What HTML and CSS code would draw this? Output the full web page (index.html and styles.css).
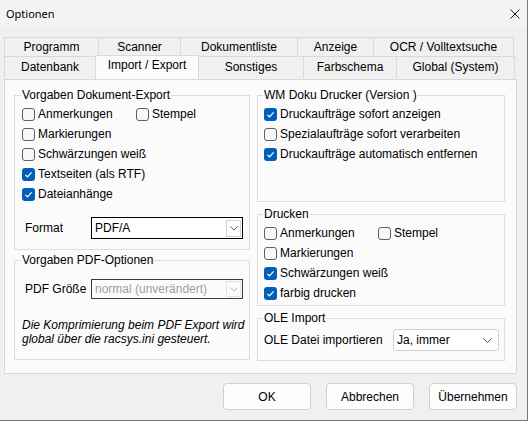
FILE: index.html
```html
<!DOCTYPE html>
<html lang="de">
<head>
<meta charset="utf-8">
<title>Optionen</title>
<link rel="stylesheet" href="styles.css">
</head>
<body>
<div class="window">
  <div class="titlebar">
    <span class="title">Optionen</span>
    <span class="close"><svg width="10" height="10" viewBox="0 0 10 10"><path d="M0.5 0.5 L9.5 9.5 M9.5 0.5 L0.5 9.5" stroke="#1a1a1a" stroke-width="1" fill="none"/></svg></span>
  </div>
  <div class="tabs">
    <div class="tabrow back">
      <div class="tab t-programm">Programm</div>
      <div class="tab t-scanner">Scanner</div>
      <div class="tab t-dokliste">Dokumentliste</div>
      <div class="tab t-anzeige">Anzeige</div>
      <div class="tab t-ocr last">OCR / Volltextsuche</div>
    </div>
    <div class="tabrow front">
      <div class="tab t-datenbank">Datenbank</div>
      <div class="tab t-import selected">Import / Export</div>
      <div class="tab t-sonstiges after-selected">Sonstiges</div>
      <div class="tab t-farbschema">Farbschema</div>
      <div class="tab t-global last">Global (System)</div>
    </div>
    <div class="panel">
      <div class="col col-left">
        <fieldset class="group g-export">
          <legend>Vorgaben Dokument-Export</legend>
          <div class="row">
            <label class="cb fixed"><span class="box"></span>Anmerkungen</label>
            <label class="cb"><span class="box"></span>Stempel</label>
          </div>
          <div class="row"><label class="cb"><span class="box"></span>Markierungen</label></div>
          <div class="row"><label class="cb"><span class="box"></span>Schwärzungen weiß</label></div>
          <div class="row"><label class="cb"><span class="box checked"><svg width="13" height="13" viewBox="0 0 13 13"><path d="M3.4 6.9 L5.5 8.8 L9.6 4.4" stroke="#fff" stroke-width="1.2" fill="none"/></svg></span>Textseiten (als RTF)</label></div>
          <div class="row"><label class="cb"><span class="box checked"><svg width="13" height="13" viewBox="0 0 13 13"><path d="M3.4 6.9 L5.5 8.8 L9.6 4.4" stroke="#fff" stroke-width="1.2" fill="none"/></svg></span>Dateianhänge</label></div>
          <div class="field-row format-row">
            <span class="field-label">Format</span>
            <div class="select select-format">
              <span class="value">PDF/A</span>
              <span class="arrowbox"><svg width="8" height="5" viewBox="0 0 8 5"><path d="M0.5 0.5 L4 4 L7.5 0.5" stroke="#606060" stroke-width="1" fill="none"/></svg></span>
            </div>
          </div>
        </fieldset>
        <fieldset class="group g-pdf">
          <legend>Vorgaben PDF-Optionen</legend>
          <div class="field-row pdf-row">
            <span class="field-label">PDF Größe</span>
            <div class="select select-pdf">
              <span class="value">normal (unverändert)</span>
              <span class="arrowbox disabled"><svg width="8" height="5" viewBox="0 0 8 5"><path d="M0.5 0.5 L4 4 L7.5 0.5" stroke="#b5b5b5" stroke-width="1" fill="none"/></svg></span>
            </div>
          </div>
          <p class="note">Die Komprimierung beim PDF Export wird<br>global über die racsys.ini gesteuert.</p>
        </fieldset>
      </div>
      <div class="col col-right">
        <fieldset class="group g-wm">
          <legend>WM Doku Drucker (Version )</legend>
          <div class="row"><label class="cb"><span class="box checked"><svg width="13" height="13" viewBox="0 0 13 13"><path d="M3.4 6.9 L5.5 8.8 L9.6 4.4" stroke="#fff" stroke-width="1.2" fill="none"/></svg></span>Druckaufträge sofort anzeigen</label></div>
          <div class="row"><label class="cb"><span class="box"></span>Spezialaufträge sofort verarbeiten</label></div>
          <div class="row"><label class="cb"><span class="box checked"><svg width="13" height="13" viewBox="0 0 13 13"><path d="M3.4 6.9 L5.5 8.8 L9.6 4.4" stroke="#fff" stroke-width="1.2" fill="none"/></svg></span>Druckaufträge automatisch entfernen</label></div>
        </fieldset>
        <fieldset class="group g-drucken">
          <legend>Drucken</legend>
          <div class="row">
            <label class="cb fixed"><span class="box"></span>Anmerkungen</label>
            <label class="cb"><span class="box"></span>Stempel</label>
          </div>
          <div class="row"><label class="cb"><span class="box"></span>Markierungen</label></div>
          <div class="row"><label class="cb"><span class="box checked"><svg width="13" height="13" viewBox="0 0 13 13"><path d="M3.4 6.9 L5.5 8.8 L9.6 4.4" stroke="#fff" stroke-width="1.2" fill="none"/></svg></span>Schwärzungen weiß</label></div>
          <div class="row"><label class="cb"><span class="box checked"><svg width="13" height="13" viewBox="0 0 13 13"><path d="M3.4 6.9 L5.5 8.8 L9.6 4.4" stroke="#fff" stroke-width="1.2" fill="none"/></svg></span>farbig drucken</label></div>
        </fieldset>
        <fieldset class="group g-ole">
          <legend>OLE Import</legend>
          <div class="field-row ole-row">
            <span class="field-label ole-label">OLE Datei importieren</span>
            <div class="select select-ole">
              <span class="value">Ja, immer</span>
              <svg class="chev" width="9" height="5" viewBox="0 0 9 5"><path d="M0.5 0.5 L4.5 4.5 L8.5 0.5" stroke="#555" stroke-width="1" fill="none"/></svg>
            </div>
          </div>
        </fieldset>
      </div>
    </div>
  </div>
  <div class="buttons">
    <button class="btn">OK</button>
    <button class="btn">Abbrechen</button>
    <button class="btn">Übernehmen</button>
  </div>
</div>
</body>
</html>
```
FILE: styles.css
```css
html, body {
  margin: 0;
  padding: 0;
  background: #ffffff;
}

body {
  font-family: "Liberation Sans", Arial, sans-serif;
  font-size: 12px;
  color: #000;
}

.window {
  width: 528px;
  height: 421px;
  box-sizing: border-box;
  background: #f0f0f0;
  border-right: 1px solid #7a7a7a;
  border-bottom: 1px solid #7a7a7a;
}

.titlebar {
  height: 27px;
  background: #f3f3f3;
  display: flex;
  align-items: center;
  justify-content: space-between;
  padding: 0 7px 0 6px;
}

.title {
  font-family: "Noto Sans", "Liberation Sans", sans-serif;
  font-size: 11px;
  color: #000;
}

.close {
  display: flex;
  width: 10px;
  height: 10px;
}

.tabs {
  margin: 10px 0 0 4px;
  width: 513px;
}

.tabrow {
  display: flex;
}

.tab {
  box-sizing: border-box;
  border-top: 1px solid #d9d9d9;
  border-left: 1px solid #d9d9d9;
  background: #f0f0f0;
  text-align: center;
  white-space: nowrap;
  color: #000;
}

.tab.last {
  border-right: 1px solid #d9d9d9;
}

.back .tab {
  height: 19px;
  line-height: 18px;
}

.front .tab {
  height: 22px;
  line-height: 21px;
}

.t-programm { width: 94px; }
.t-scanner { width: 82px; }
.t-dokliste { width: 117px; }
.t-anzeige { width: 76px; }
.t-ocr { width: 141px; }

.t-datenbank { width: 91px; }
.t-import { width: 104px; }
.t-sonstiges { width: 104px; }
.t-farbschema { width: 93px; }
.t-global { width: 119px; }

.tab.after-selected {
  border-left: none;
}

.front .tab.selected {
  position: relative;
  z-index: 1;
  margin-top: -1px;
  height: 24px;
  line-height: 18px;
  background: #fbfbfb;
  border-right: 1px solid #d9d9d9;
}

.panel {
  box-sizing: border-box;
  width: 513px;
  height: 295px;
  border: 1px solid #d9d9d9;
  background: #fbfbfb;
  display: flex;
  gap: 7px;
  padding: 8px 11px 0 9px;
}

.col {
  display: flex;
  flex-direction: column;
}

.col-left { width: 236px; }
.col-right { width: 248px; }

.group {
  box-sizing: border-box;
  margin: 0;
  min-width: 0;
  border: 1px solid #dcdcdc;
  padding: 1px 0 0 7px;
}

.col-right .group {
  padding-left: 6px;
}

.group legend {
  padding: 0 1px;
  margin-left: -1px;
  line-height: 15px;
  font-size: 12px;
  color: #000;
}

.g-export { height: 162px; }
.g-pdf { height: 107px; margin-top: 3px; padding-top: 0; }
.g-wm { height: 114px; }
.g-drucken { height: 99px; margin-top: 5px; padding-top: 1px; }
.g-ole { height: 50px; margin-top: 5px; padding-top: 3px; }

.row {
  display: flex;
  align-items: center;
  height: 20px;
}

.cb {
  display: inline-flex;
  align-items: center;
  white-space: nowrap;
  line-height: 20px;
}

.cb.fixed {
  width: 114px;
}

.box {
  box-sizing: border-box;
  width: 13px;
  height: 13px;
  border: 1px solid #5f5f5f;
  border-radius: 3px;
  background: #f8f8f8;
  margin-right: 3px;
  flex: none;
  display: flex;
}

.box.checked {
  border: none;
  background: #005fb8;
}

.field-row {
  display: flex;
  align-items: center;
}

.field-label {
  box-sizing: border-box;
  width: 69px;
  padding-left: 3px;
  white-space: nowrap;
}

.format-row {
  margin-top: 13px;
}

.pdf-row {
  margin-top: 11px;
}

.select {
  box-sizing: border-box;
  display: flex;
  align-items: center;
  justify-content: space-between;
  background: #fff;
  white-space: nowrap;
}

.select-format {
  width: 152px;
  height: 22px;
  border: 1px solid #000;
  padding: 0 1px 0 3px;
}

.select-pdf {
  width: 152px;
  height: 20px;
  border: 1px solid #3a3a3a;
  padding: 0 1px 0 3px;
  background: #fbfbfb;
}

.select-pdf .value {
  color: #a0a0a0;
}

.arrowbox {
  box-sizing: border-box;
  width: 15px;
  height: 17px;
  border: 1px solid #d0d0d0;
  background: #fff;
  display: flex;
  align-items: center;
  justify-content: center;
}

.select-pdf .arrowbox {
  height: 16px;
  border-color: #e2e2e2;
  background: #fbfbfb;
}

.note {
  margin: 19px 0 0 0;
  font-style: italic;
  font-size: 12px;
  line-height: 14px;
  white-space: nowrap;
}

.ole-label {
  width: 129px;
  padding-left: 0;
}

.select-ole {
  width: 106px;
  height: 22px;
  border: 1px solid #cfcfcf;
  border-radius: 3px;
  padding: 0 6px 0 3px;
}

.buttons {
  display: flex;
  justify-content: flex-end;
  gap: 15px;
  margin-top: 9px;
  padding-right: 10px;
}

.btn {
  box-sizing: border-box;
  width: 88px;
  height: 27px;
  border: 1px solid #d0d0d0;
  border-radius: 4px;
  background: #fdfdfd;
  font-family: "Liberation Sans", Arial, sans-serif;
  font-size: 12px;
  color: #000;
  padding: 0;
}
```
